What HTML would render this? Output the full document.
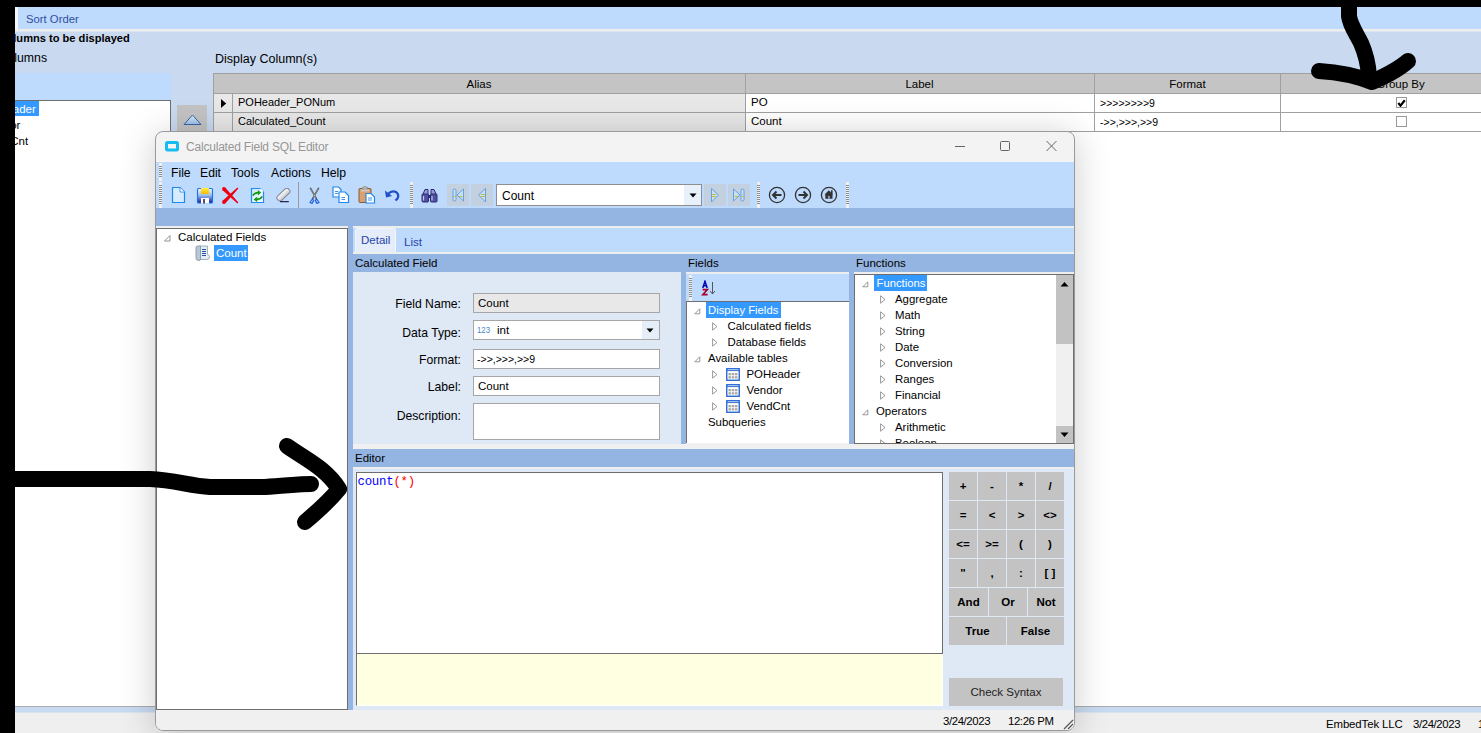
<!DOCTYPE html><html><head><meta charset="utf-8"><style>
html,body{margin:0;padding:0;width:1481px;height:733px;overflow:hidden;background:#fff}
.a{position:absolute}
.t{white-space:nowrap}
</style></head><body>
<div class="a" style="left:0px;top:0px;width:1481px;height:733px;background:#fff"></div><div class="a" style="left:15px;top:7px;width:1466px;height:22px;background:#BEDAFC"></div><div class="a" style="left:15px;top:7px;width:3px;height:22px;background:#F4F8FD"></div><div class="a" style="left:15px;top:31px;width:1466px;height:675px;background:#C9DAF0"></div><div class="a" style="left:15px;top:29px;width:1466px;height:2px;background:#EEEEEE"></div><div class="a" style="left:15px;top:31px;width:1466px;height:1px;background:#DCE5F1"></div><div class="a t" style="left:26px;top:14.43px;font-size:11.3px;line-height:11.3px;color:#3050A0;font-weight:normal;font-family:'Liberation Sans';">Sort Order</div><div class="a t" style="left:-1.5px;top:32.60px;font-size:11.1px;line-height:11.1px;color:#000;font-weight:bold;font-family:'Liberation Sans';">Columns to be displayed</div><div class="a t" style="left:-54.6px;top:51.79px;font-size:12.3px;line-height:12.3px;color:#000;font-weight:normal;font-family:'Liberation Sans';">Available Columns</div><div class="a t" style="left:215px;top:52.62px;font-size:12.5px;line-height:12.5px;color:#000;font-weight:normal;font-family:'Liberation Sans';">Display Column(s)</div><div class="a" style="left:15px;top:73px;width:156px;height:27px;background:#BEDAFC"></div><div class="a" style="left:15px;top:100px;width:156px;height:606px;background:#fff;border-top:1px solid #6E6E6E;border-right:1px solid #6E6E6E;box-sizing:border-box"></div><div class="a" style="left:15px;top:101px;width:24px;height:15px;background:#3399FF"></div><div class="a t" style="left:-18.5px;top:103.57px;font-size:11.5px;line-height:11.5px;color:#fff;font-weight:normal;font-family:'Liberation Sans';">POHeader</div><div class="a t" style="left:-16px;top:119.57px;font-size:11.5px;line-height:11.5px;color:#000;font-weight:normal;font-family:'Liberation Sans';">Vendor</div><div class="a t" style="left:-16px;top:135.57px;font-size:11.5px;line-height:11.5px;color:#000;font-weight:normal;font-family:'Liberation Sans';">VendCnt</div><div class="a" style="left:177px;top:105px;width:30px;height:27px;background:#C3C3C3"></div><svg class="a" style="left:183px;top:114px;" width="19" height="12" viewBox="0 0 19 12"><defs><linearGradient id="ug" x1="0" y1="0" x2="0" y2="1"><stop offset="0" stop-color="#E0EEFC"/><stop offset="1" stop-color="#98BEEA"/></linearGradient></defs><path d="M1 10.5 L9.5 1 L18 10.5 Z" fill="url(#ug)" stroke="#3A64A8" stroke-width="1"/></svg><div class="a" style="left:213px;top:131px;width:1268px;height:575px;background:#fff"></div><div class="a" style="left:213px;top:73px;width:1308px;height:21px;background:#C4C4C4;border:1px solid #A0A0A0;box-sizing:border-box"></div><div class="a" style="left:745px;top:73px;width:1px;height:21px;background:#A0A0A0"></div><div class="a" style="left:1094px;top:73px;width:1px;height:21px;background:#A0A0A0"></div><div class="a" style="left:1280px;top:73px;width:1px;height:21px;background:#A0A0A0"></div><div class="a" style="left:213px;top:94px;width:19px;height:19px;background:#E8E8E8;border-left:1px solid #A0A0A0;border-bottom:1px solid #A0A0A0;box-sizing:border-box"></div><div class="a" style="left:232px;top:94px;width:513px;height:19px;background:#E8E8E8;border-left:1px solid #A0A0A0;border-bottom:1px solid #A0A0A0;box-sizing:border-box"></div><div class="a" style="left:745px;top:94px;width:349px;height:19px;background:#fff;border-left:1px solid #A0A0A0;border-bottom:1px solid #A0A0A0;box-sizing:border-box"></div><div class="a" style="left:1094px;top:94px;width:186px;height:19px;background:#fff;border-left:1px solid #A0A0A0;border-bottom:1px solid #A0A0A0;box-sizing:border-box"></div><div class="a" style="left:1280px;top:94px;width:241px;height:19px;background:#fff;border-left:1px solid #A0A0A0;border-bottom:1px solid #A0A0A0;box-sizing:border-box"></div><div class="a" style="left:213px;top:113px;width:19px;height:19px;background:#E8E8E8;border-left:1px solid #A0A0A0;border-bottom:1px solid #A0A0A0;box-sizing:border-box"></div><div class="a" style="left:232px;top:113px;width:513px;height:19px;background:#E8E8E8;border-left:1px solid #A0A0A0;border-bottom:1px solid #A0A0A0;box-sizing:border-box"></div><div class="a" style="left:745px;top:113px;width:349px;height:19px;background:#fff;border-left:1px solid #A0A0A0;border-bottom:1px solid #A0A0A0;box-sizing:border-box"></div><div class="a" style="left:1094px;top:113px;width:186px;height:19px;background:#fff;border-left:1px solid #A0A0A0;border-bottom:1px solid #A0A0A0;box-sizing:border-box"></div><div class="a" style="left:1280px;top:113px;width:241px;height:19px;background:#fff;border-left:1px solid #A0A0A0;border-bottom:1px solid #A0A0A0;box-sizing:border-box"></div><div class="a t" style="left:213px;top:78.77px;font-size:11.5px;line-height:11.5px;color:#000;font-weight:normal;font-family:'Liberation Sans';width:532px;text-align:center;">Alias</div><div class="a t" style="left:745px;top:78.77px;font-size:11.5px;line-height:11.5px;color:#000;font-weight:normal;font-family:'Liberation Sans';width:349px;text-align:center;">Label</div><div class="a t" style="left:1094px;top:78.77px;font-size:11.5px;line-height:11.5px;color:#000;font-weight:normal;font-family:'Liberation Sans';width:187px;text-align:center;">Format</div><div class="a t" style="left:1280px;top:78.77px;font-size:11.5px;line-height:11.5px;color:#000;font-weight:normal;font-family:'Liberation Sans';width:241px;text-align:center;">Group By</div><svg class="a" style="left:220px;top:98px;" width="7" height="11" viewBox="0 0 7 11"><path d="M1 1 L6.2 5.5 L1 10 Z" fill="#000"/></svg><div class="a t" style="left:238px;top:96.69px;font-size:11px;line-height:11px;color:#000;font-weight:normal;font-family:'Liberation Sans';">POHeader_PONum</div><div class="a t" style="left:238px;top:115.69px;font-size:11px;line-height:11px;color:#000;font-weight:normal;font-family:'Liberation Sans';">Calculated_Count</div><div class="a t" style="left:751px;top:97.27px;font-size:11.5px;line-height:11.5px;color:#000;font-weight:normal;font-family:'Liberation Sans';">PO</div><div class="a t" style="left:751px;top:116.27px;font-size:11.5px;line-height:11.5px;color:#000;font-weight:normal;font-family:'Liberation Sans';">Count</div><div class="a t" style="left:1100px;top:98.11px;font-size:10.5px;line-height:10.5px;color:#000;font-weight:normal;font-family:'Liberation Sans';">&gt;&gt;&gt;&gt;&gt;&gt;&gt;&gt;9</div><div class="a t" style="left:1100px;top:117.11px;font-size:10.5px;line-height:10.5px;color:#000;font-weight:normal;font-family:'Liberation Sans';">-&gt;&gt;,&gt;&gt;&gt;,&gt;&gt;9</div><div class="a" style="left:1396px;top:97px;width:11px;height:11px;background:#fff;border:1px solid #999;box-sizing:border-box"></div><svg class="a" style="left:1397px;top:99px;" width="9" height="8" viewBox="0 0 9 8"><path d="M1.3 4 L3.5 6.6 L7.8 1.2" fill="none" stroke="#000" stroke-width="2.2"/></svg><div class="a" style="left:1396px;top:116px;width:11px;height:11px;background:#fff;border:1px solid #999;box-sizing:border-box"></div><div class="a" style="left:15px;top:706px;width:1466px;height:1px;background:#ACACAC"></div><div class="a" style="left:15px;top:707px;width:1466px;height:5px;background:#C8DAF0"></div><div class="a" style="left:15px;top:712px;width:1466px;height:1px;background:#DCE4EE"></div><div class="a" style="left:15px;top:713px;width:1466px;height:20px;background:#EFEFEF"></div><div class="a t" style="left:1326px;top:718.85px;font-size:11.4px;line-height:11.4px;color:#000;font-weight:normal;font-family:'Liberation Sans';letter-spacing:-0.1px;">EmbedTek LLC</div><div class="a t" style="left:1413px;top:718.85px;font-size:11.4px;line-height:11.4px;color:#000;font-weight:normal;font-family:'Liberation Sans';letter-spacing:-0.4px;">3/24/2023</div><div class="a t" style="left:1478px;top:718.85px;font-size:11.4px;line-height:11.4px;color:#000;font-weight:normal;font-family:'Liberation Sans';letter-spacing:-0.4px;">12:26 PM</div><div class="a" style="left:155px;top:131px;width:920px;height:600px;border-radius:8px;box-shadow:0 4px 36px rgba(0,0,0,0.2)"></div><div class="a" style="left:155px;top:131px;width:920px;height:600px;border-radius:8px;background:#F3F3F3;border:1px solid #9A9A9A;box-sizing:border-box;overflow:hidden"><svg class="a" style="left:9px;top:9px;" width="14" height="11" viewBox="0 0 14 11"><rect x="0" y="0" width="14" height="10.5" rx="2.5" fill="#16BDF0"/><rect x="3" y="3" width="8" height="4.5" fill="#F4F4F4"/></svg><div class="a t" style="left:30px;top:8.84px;font-size:12px;line-height:12px;color:#969696;font-weight:normal;font-family:'Liberation Sans';letter-spacing:-0.2px;">Calculated Field SQL Editor</div><svg class="a" style="left:794px;top:8px;" width="20" height="12" viewBox="0 0 20 12"><path d="M5 6.5 H15" stroke="#555" stroke-width="0.9"/></svg><svg class="a" style="left:839px;top:7px;" width="20" height="14" viewBox="0 0 20 14"><rect x="5.5" y="2.5" width="9" height="9" rx="1" fill="none" stroke="#555" stroke-width="0.9"/></svg><svg class="a" style="left:885px;top:7px;" width="20" height="14" viewBox="0 0 20 14"><path d="M5.5 2 L15.5 12 M15.5 2 L5.5 12" stroke="#555" stroke-width="0.9"/></svg><div class="a" style="left:0px;top:30px;width:918px;height:46px;background:#BEDAFC"></div><div class="a t" style="left:15px;top:34.67px;font-size:12.2px;line-height:12.2px;color:#000;font-weight:normal;font-family:'Liberation Sans';">File</div><div class="a t" style="left:44px;top:34.67px;font-size:12.2px;line-height:12.2px;color:#000;font-weight:normal;font-family:'Liberation Sans';">Edit</div><div class="a t" style="left:75px;top:34.67px;font-size:12.2px;line-height:12.2px;color:#000;font-weight:normal;font-family:'Liberation Sans';">Tools</div><div class="a t" style="left:115px;top:34.67px;font-size:12.2px;line-height:12.2px;color:#000;font-weight:normal;font-family:'Liberation Sans';">Actions</div><div class="a t" style="left:165px;top:34.67px;font-size:12.2px;line-height:12.2px;color:#000;font-weight:normal;font-family:'Liberation Sans';">Help</div><div class="a" style="left:3px;top:31px;width:3px;height:18px;background:#F2F0EC"></div><div class="a" style="left:3px;top:34px;width:3px;height:1px;background:#8C8C8C"></div><div class="a" style="left:3px;top:36px;width:3px;height:1px;background:#8C8C8C"></div><div class="a" style="left:3px;top:38px;width:3px;height:1px;background:#8C8C8C"></div><div class="a" style="left:3px;top:40px;width:3px;height:1px;background:#8C8C8C"></div><div class="a" style="left:3px;top:42px;width:3px;height:1px;background:#8C8C8C"></div><div class="a" style="left:3px;top:44px;width:3px;height:1px;background:#8C8C8C"></div><div class="a" style="left:3px;top:50px;width:3px;height:26px;background:#F2F0EC"></div><div class="a" style="left:3px;top:53px;width:3px;height:1px;background:#8C8C8C"></div><div class="a" style="left:3px;top:55px;width:3px;height:1px;background:#8C8C8C"></div><div class="a" style="left:3px;top:57px;width:3px;height:1px;background:#8C8C8C"></div><div class="a" style="left:3px;top:59px;width:3px;height:1px;background:#8C8C8C"></div><div class="a" style="left:3px;top:61px;width:3px;height:1px;background:#8C8C8C"></div><div class="a" style="left:3px;top:63px;width:3px;height:1px;background:#8C8C8C"></div><div class="a" style="left:3px;top:65px;width:3px;height:1px;background:#8C8C8C"></div><div class="a" style="left:3px;top:67px;width:3px;height:1px;background:#8C8C8C"></div><div class="a" style="left:3px;top:69px;width:3px;height:1px;background:#8C8C8C"></div><div class="a" style="left:3px;top:71px;width:3px;height:1px;background:#8C8C8C"></div><svg class="a" style="left:15px;top:54px;" width="16" height="18" viewBox="0 0 16 18"><path d="M1.5 1.5 H9 L13.5 6 V16.5 H1.5 Z" fill="#D6EBFC" stroke="#1E88F0" stroke-width="1.2" stroke-linejoin="round"/><path d="M9 1.5 V6 H13.5" fill="#fff" stroke="#1E88F0" stroke-width="0.8"/></svg><svg class="a" style="left:40px;top:55px;" width="18" height="17" viewBox="0 0 18 17"><defs><linearGradient id="sg" x1="0" y1="0" x2="0" y2="1"><stop offset="0" stop-color="#F0F8FF"/><stop offset="0.45" stop-color="#9CC4F0"/><stop offset="1" stop-color="#1A1AA0"/></linearGradient><linearGradient id="yg" x1="0" y1="0" x2="0" y2="1"><stop offset="0" stop-color="#FFF040"/><stop offset="1" stop-color="#F8B800"/></linearGradient></defs><rect x="1.5" y="1.5" width="15" height="14.5" rx="1" fill="url(#sg)" stroke="#1A72F2" stroke-width="1.1"/><rect x="5" y="1" width="8" height="6" fill="url(#yg)"/><rect x="5" y="11" width="8" height="5.5" fill="#fff"/><rect x="7" y="12" width="2" height="4.5" fill="#555"/></svg><svg class="a" style="left:66px;top:55px;" width="17" height="17" viewBox="0 0 17 17"><g fill="#EE0010"><path d="M0.6 3.2 L3.2 0.6 L16.4 15.4 L15.4 16.4 Z"/><circle cx="1.9" cy="1.9" r="1.85"/><path d="M0.6 13.8 L3.2 16.4 L16.4 1.6 L15.4 0.6 Z"/><circle cx="1.9" cy="15.1" r="1.85"/></g></svg><svg class="a" style="left:94px;top:55px;" width="15" height="17" viewBox="0 0 15 17"><defs><linearGradient id="rg" x1="0" y1="0" x2="1" y2="1"><stop offset="0" stop-color="#C8E6FC"/><stop offset="1" stop-color="#FFFFFF"/></linearGradient></defs><path d="M1.5 1.5 H10.5 L13.5 4.5 V15.5 H1.5 Z" fill="url(#rg)" stroke="#1E8CF5" stroke-width="1.2"/><path d="M10.5 1 V4.5 H14" fill="#fff" stroke="none"/><g fill="none" stroke="#109A10" stroke-width="1.7"><path d="M2.8 8.6 Q4.5 5.6 8.6 5.6"/><path d="M12.2 9.4 Q10.5 12.6 6.4 12.4"/></g><g fill="#109A10"><path d="M7.8 3 L11.2 5.6 L7.8 8.4 Z"/><path d="M7.2 9.8 L3.6 12.4 L7.2 15 Z"/></g></svg><svg class="a" style="left:119px;top:56px;" width="17" height="15" viewBox="0 0 17 15"><defs><linearGradient id="eg" x1="0" y1="0" x2="0" y2="1"><stop offset="0" stop-color="#FFFFFF"/><stop offset="1" stop-color="#C4C8D0"/></linearGradient></defs><rect x="-7.6" y="-2.9" width="15.2" height="5.8" rx="2.4" transform="translate(8.4,6.6) rotate(-43)" fill="url(#eg)" stroke="#7E8694" stroke-width="1"/><path d="M5 13.6 H13.8" stroke="#262650" stroke-width="1.3"/></svg><div class="a" style="left:142px;top:50px;width:1px;height:26px;background:#9A9A9A"></div><svg class="a" style="left:151px;top:55px;" width="15" height="17" viewBox="0 0 15 17"><path d="M3.2 0.8 L9.6 12.2 M11.8 0.8 L5.4 12.2" stroke="#333" stroke-width="1.5"/><path d="M3.4 1.4 L9.2 11.6 M11.6 1.4 L5.8 11.6" stroke="#F4F4F4" stroke-width="0.5"/><path d="M5.4 12 L3 15.5 L5 16.3 L6.6 13.6 Z M9.6 12 L12 15.5 L10 16.3 L8.4 13.6 Z" fill="#fff" stroke="#1F5FE0" stroke-width="1.3" stroke-linejoin="round"/></svg><svg class="a" style="left:176px;top:54px;" width="18" height="18" viewBox="0 0 18 18"><path d="M1 1 H6.5 L9 3.5 V11 H1 Z" fill="#fff" stroke="#1E88F0" stroke-width="1.2"/><path d="M7 6 H13 L16.5 9.5 V16.5 H7 Z" fill="#fff" stroke="#1E88F0" stroke-width="1.2"/><path d="M3 5.5 H6 M3 7.5 H6 M9.5 11.5 H13 M9.5 13.5 H13" stroke="#1E88F0" stroke-width="0.9"/></svg><svg class="a" style="left:202px;top:54px;" width="18" height="18" viewBox="0 0 18 18"><rect x="1" y="2.5" width="12" height="14" rx="1" fill="#D9A070" stroke="#8A5A30" stroke-width="1"/><path d="M4 3 Q4 0.8 7 0.8 Q10 0.8 10 3 Z" fill="#DDD" stroke="#777" stroke-width="0.9"/><rect x="3" y="3.5" width="8" height="2" fill="#C9C9C9"/><path d="M8 7.5 H13 L16.5 11 V17 H8 Z" fill="#fff" stroke="#1E88F0" stroke-width="1.2"/><path d="M10 12 H14 M10 14 H14" stroke="#1E88F0" stroke-width="0.9"/></svg><svg class="a" style="left:228px;top:56px;" width="17" height="15" viewBox="0 0 17 15"><path d="M4 6 Q8 2 12 4 Q15.5 6.5 13.5 10.5 L11.5 12.5" fill="none" stroke="#2050C8" stroke-width="2.2"/><path d="M1 2.5 L2 9.5 L8 8 Z" fill="#2050C8"/></svg><div class="a" style="left:254px;top:50px;width:3px;height:26px;background:#F2F0EC"></div><div class="a" style="left:254px;top:53px;width:3px;height:1px;background:#8C8C8C"></div><div class="a" style="left:254px;top:55px;width:3px;height:1px;background:#8C8C8C"></div><div class="a" style="left:254px;top:57px;width:3px;height:1px;background:#8C8C8C"></div><div class="a" style="left:254px;top:59px;width:3px;height:1px;background:#8C8C8C"></div><div class="a" style="left:254px;top:61px;width:3px;height:1px;background:#8C8C8C"></div><div class="a" style="left:254px;top:63px;width:3px;height:1px;background:#8C8C8C"></div><div class="a" style="left:254px;top:65px;width:3px;height:1px;background:#8C8C8C"></div><div class="a" style="left:254px;top:67px;width:3px;height:1px;background:#8C8C8C"></div><div class="a" style="left:254px;top:69px;width:3px;height:1px;background:#8C8C8C"></div><div class="a" style="left:254px;top:71px;width:3px;height:1px;background:#8C8C8C"></div><svg class="a" style="left:265px;top:56px;" width="17" height="15" viewBox="0 0 17 15"><path d="M2 6 L4 1.5 H7 V6 M10 6 V1.5 H13 L15 6" fill="#9A9AD8" stroke="#2A2A70" stroke-width="1"/><rect x="1" y="6" width="6.5" height="8" rx="1" fill="#5050A0" stroke="#2A2A70" stroke-width="1"/><rect x="9.5" y="6" width="6.5" height="8" rx="1" fill="#5050A0" stroke="#2A2A70" stroke-width="1"/><rect x="7" y="7" width="3" height="3" fill="#2A2A70"/><path d="M2.5 8 V12.5 M11 8 V12.5" stroke="#C8C8F0" stroke-width="1.2"/></svg><div class="a" style="left:291px;top:52px;width:22px;height:22px;background:#C3D0E0"></div><div class="a" style="left:315px;top:52px;width:22px;height:22px;background:#C3D0E0"></div><svg class="a" style="left:291px;top:52px;" width="22" height="22" viewBox="0 0 22 22"><rect x="6" y="5" width="3" height="12" rx="1.5" fill="#C8E0F4" stroke="#5A9AE0" stroke-width="0.9"/><path d="M16.5 5 L10 11 L16.5 17 Z" fill="#C8E0F4" stroke="#5A9AE0" stroke-width="0.9"/><path d="M12 12.5 H15.5 M6.5 12.5 H8.5" stroke="#C0C040" stroke-width="1"/></svg><svg class="a" style="left:315px;top:52px;" width="22" height="22" viewBox="0 0 22 22"><path d="M14.5 4.5 L7.5 11 L14.5 18 Z" fill="#C8E0F4" stroke="#5A9AE0" stroke-width="0.9"/><path d="M10 10.5 H14 M10 12.5 H14" stroke="#C0C040" stroke-width="1"/></svg><div class="a" style="left:340px;top:52px;width:206px;height:22px;background:#fff;border:1px solid #8E8E8E;box-sizing:border-box"></div><div class="a" style="left:528px;top:53px;width:17px;height:20px;background:#E8F0FA"></div><svg class="a" style="left:533px;top:61px;" width="8" height="5" viewBox="0 0 8 5"><path d="M0.5 0.5 H7.5 L4 4.5 Z" fill="#000"/></svg><div class="a t" style="left:346px;top:57.64px;font-size:12px;line-height:12px;color:#000;font-weight:normal;font-family:'Liberation Sans';">Count</div><div class="a" style="left:548px;top:52px;width:22px;height:22px;background:#C3D0E0"></div><div class="a" style="left:572px;top:52px;width:22px;height:22px;background:#C3D0E0"></div><svg class="a" style="left:548px;top:52px;" width="22" height="22" viewBox="0 0 22 22"><path d="M7.5 4.5 L14.5 11 L7.5 18 Z" fill="#C8E0F4" stroke="#5A9AE0" stroke-width="0.9"/><path d="M8 10.5 H12 M8 12.5 H12" stroke="#C0C040" stroke-width="1"/></svg><svg class="a" style="left:572px;top:52px;" width="22" height="22" viewBox="0 0 22 22"><path d="M5.5 5 L12 11 L5.5 17 Z" fill="#C8E0F4" stroke="#5A9AE0" stroke-width="0.9"/><rect x="13" y="5" width="3" height="12" rx="1.5" fill="#C8E0F4" stroke="#5A9AE0" stroke-width="0.9"/><path d="M6.5 12.5 H10 M13.5 12.5 H15.5" stroke="#C0C040" stroke-width="1"/></svg><div class="a" style="left:601px;top:50px;width:3px;height:26px;background:#F2F0EC"></div><div class="a" style="left:601px;top:53px;width:3px;height:1px;background:#8C8C8C"></div><div class="a" style="left:601px;top:55px;width:3px;height:1px;background:#8C8C8C"></div><div class="a" style="left:601px;top:57px;width:3px;height:1px;background:#8C8C8C"></div><div class="a" style="left:601px;top:59px;width:3px;height:1px;background:#8C8C8C"></div><div class="a" style="left:601px;top:61px;width:3px;height:1px;background:#8C8C8C"></div><div class="a" style="left:601px;top:63px;width:3px;height:1px;background:#8C8C8C"></div><div class="a" style="left:601px;top:65px;width:3px;height:1px;background:#8C8C8C"></div><div class="a" style="left:601px;top:67px;width:3px;height:1px;background:#8C8C8C"></div><div class="a" style="left:601px;top:69px;width:3px;height:1px;background:#8C8C8C"></div><div class="a" style="left:601px;top:71px;width:3px;height:1px;background:#8C8C8C"></div><svg class="a" style="left:612px;top:54px;" width="18" height="18" viewBox="0 0 18 18"><circle cx="9" cy="9" r="7.6" fill="none" stroke="#333" stroke-width="1.3"/><path d="M13.5 9 H5.5 M8.5 5.5 L5 9 L8.5 12.5" fill="none" stroke="#333" stroke-width="2"/></svg><svg class="a" style="left:638px;top:54px;" width="18" height="18" viewBox="0 0 18 18"><circle cx="9" cy="9" r="7.6" fill="none" stroke="#333" stroke-width="1.3"/><path d="M4.5 9 H12.5 M9.5 5.5 L13 9 L9.5 12.5" fill="none" stroke="#333" stroke-width="2"/></svg><svg class="a" style="left:664px;top:54px;" width="18" height="18" viewBox="0 0 18 18"><circle cx="9" cy="9" r="7.6" fill="none" stroke="#333" stroke-width="1.3"/><path d="M4.6 8.6 L8.8 4.3 L11 6.5 V4.2 H12.6 V8.1 L13.2 8.6 H12.5 V12.8 H5.3 V8.6 Z" fill="#333"/><rect x="7.9" y="9.9" width="2" height="2.9" fill="#8A9AB0"/></svg><div class="a" style="left:690px;top:50px;width:3px;height:26px;background:#F2F0EC"></div><div class="a" style="left:690px;top:53px;width:3px;height:1px;background:#8C8C8C"></div><div class="a" style="left:690px;top:55px;width:3px;height:1px;background:#8C8C8C"></div><div class="a" style="left:690px;top:57px;width:3px;height:1px;background:#8C8C8C"></div><div class="a" style="left:690px;top:59px;width:3px;height:1px;background:#8C8C8C"></div><div class="a" style="left:690px;top:61px;width:3px;height:1px;background:#8C8C8C"></div><div class="a" style="left:690px;top:63px;width:3px;height:1px;background:#8C8C8C"></div><div class="a" style="left:690px;top:65px;width:3px;height:1px;background:#8C8C8C"></div><div class="a" style="left:690px;top:67px;width:3px;height:1px;background:#8C8C8C"></div><div class="a" style="left:690px;top:69px;width:3px;height:1px;background:#8C8C8C"></div><div class="a" style="left:690px;top:71px;width:3px;height:1px;background:#8C8C8C"></div><div class="a" style="left:0px;top:76px;width:918px;height:18px;background:#94B4E1"></div><div class="a" style="left:0px;top:94px;width:192px;height:2px;background:#EEEEEE"></div><div class="a" style="left:197px;top:94px;width:721px;height:2px;background:#EEEEEE"></div><div class="a" style="left:0px;top:96px;width:192px;height:482px;background:#fff;border:1px solid #6E6E6E;box-sizing:border-box"></div><div class="a t" style="left:22px;top:99.77px;font-size:11.5px;line-height:11.5px;color:#000;font-weight:normal;font-family:'Liberation Sans';">Calculated Fields</div><svg class="a" style="left:8px;top:103px;" width="7" height="7" viewBox="0 0 7 7"><path d="M6 0.5 V6 H0.5 Z" fill="none" stroke="#888" stroke-width="0.9"/></svg><div class="a" style="left:58px;top:113px;width:34px;height:16px;background:#3399FF"></div><svg class="a" style="left:39px;top:113px;" width="15" height="16" viewBox="0 0 15 16"><path d="M5 1 H12.5 V9.5 Q14.5 10 14.5 12 Q14.5 14.5 12 14.5 H5 Z" fill="#E4ECF4" stroke="#9AAAB8" stroke-width="0.9"/><path d="M1 2.5 Q1 1 3 1 H5.5 V14 Q5.5 15.5 4 15.5 Q1 15.5 1 13 Z" fill="#B8C8D8" stroke="#8898A8" stroke-width="0.9"/><path d="M7 4.5 H11 M7 6.5 H11 M7 8.5 H11 M7 10.5 H11" stroke="#2A50A0" stroke-width="1"/></svg><div class="a t" style="left:60px;top:116.27px;font-size:11.5px;line-height:11.5px;color:#fff;font-weight:normal;font-family:'Liberation Sans';">Count</div><div class="a" style="left:192px;top:94px;width:5px;height:484px;background:#94B4E1"></div><div class="a" style="left:197px;top:96px;width:721px;height:24px;background:#BEDAFC"></div><div class="a" style="left:199px;top:96px;width:41px;height:24px;background:#E4EDF9;border:1px solid #F2F7FD;border-bottom:none;border-radius:3px 3px 0 0;box-sizing:border-box"></div><div class="a t" style="left:205px;top:103.27px;font-size:11.5px;line-height:11.5px;color:#2844A8;font-weight:normal;font-family:'Liberation Sans';">Detail</div><div class="a t" style="left:248px;top:105.27px;font-size:11.5px;line-height:11.5px;color:#2844A8;font-weight:normal;font-family:'Liberation Sans';">List</div><div class="a" style="left:197px;top:120px;width:721px;height:2px;background:#EEEEEE"></div><div class="a" style="left:197px;top:122px;width:721px;height:18px;background:#94B4E1"></div><div class="a t" style="left:199px;top:126.27px;font-size:11.5px;line-height:11.5px;color:#000;font-weight:normal;font-family:'Liberation Sans';">Calculated Field</div><div class="a t" style="left:532px;top:126.27px;font-size:11.5px;line-height:11.5px;color:#000;font-weight:normal;font-family:'Liberation Sans';">Fields</div><div class="a t" style="left:700px;top:126.27px;font-size:11.5px;line-height:11.5px;color:#000;font-weight:normal;font-family:'Liberation Sans';">Functions</div><div class="a" style="left:197px;top:140px;width:328px;height:172px;background:#DFE8F5"></div><div class="a t" style="left:204px;top:165.67px;font-size:12.2px;line-height:12.2px;color:#000;font-weight:normal;font-family:'Liberation Sans';width:101px;text-align:right;">Field Name:</div><div class="a t" style="left:204px;top:194.67px;font-size:12.2px;line-height:12.2px;color:#000;font-weight:normal;font-family:'Liberation Sans';width:101px;text-align:right;">Data Type:</div><div class="a t" style="left:204px;top:221.67px;font-size:12.2px;line-height:12.2px;color:#000;font-weight:normal;font-family:'Liberation Sans';width:101px;text-align:right;">Format:</div><div class="a t" style="left:204px;top:248.67px;font-size:12.2px;line-height:12.2px;color:#000;font-weight:normal;font-family:'Liberation Sans';width:101px;text-align:right;">Label:</div><div class="a t" style="left:204px;top:278.47px;font-size:12.2px;line-height:12.2px;color:#000;font-weight:normal;font-family:'Liberation Sans';width:101px;text-align:right;">Description:</div><div class="a" style="left:317px;top:161px;width:187px;height:20px;background:#E8E8E8;border:1px solid #A6A6A6;box-sizing:border-box"></div><div class="a t" style="left:322px;top:165.77px;font-size:11.5px;line-height:11.5px;color:#000;font-weight:normal;font-family:'Liberation Sans';">Count</div><div class="a" style="left:317px;top:188px;width:187px;height:20px;background:#fff;border:1px solid #A6A6A6;box-sizing:border-box"></div><div class="a" style="left:486px;top:189px;width:17px;height:18px;background:#E5EEF9"></div><svg class="a" style="left:490px;top:196px;" width="8" height="5" viewBox="0 0 8 5"><path d="M0.5 0.5 H7.5 L4 4.5 Z" fill="#000"/></svg><div class="a t" style="left:321px;top:193.30px;font-size:9.8px;line-height:9.8px;color:#4A88D0;font-weight:normal;font-family:'Liberation Sans';transform:scaleX(0.8);transform-origin:0 0;">123</div><div class="a t" style="left:341px;top:193.07px;font-size:11.5px;line-height:11.5px;color:#000;font-weight:normal;font-family:'Liberation Sans';">int</div><div class="a" style="left:317px;top:217px;width:187px;height:20px;background:#fff;border:1px solid #A6A6A6;box-sizing:border-box"></div><div class="a t" style="left:321px;top:222.31px;font-size:10.5px;line-height:10.5px;color:#000;font-weight:normal;font-family:'Liberation Sans';">-&gt;&gt;,&gt;&gt;&gt;,&gt;&gt;9</div><div class="a" style="left:317px;top:244px;width:187px;height:20px;background:#fff;border:1px solid #A6A6A6;box-sizing:border-box"></div><div class="a t" style="left:322px;top:249.27px;font-size:11.5px;line-height:11.5px;color:#000;font-weight:normal;font-family:'Liberation Sans';">Count</div><div class="a" style="left:317px;top:271px;width:187px;height:37px;background:#fff;border:1px solid #A6A6A6;box-sizing:border-box"></div><div class="a" style="left:525px;top:140px;width:5px;height:172px;background:#94B4E1"></div><div class="a" style="left:530px;top:140px;width:163px;height:2px;background:#EEEEEE"></div><div class="a" style="left:530px;top:142px;width:163px;height:27px;background:#BEDAFC"></div><div class="a" style="left:530px;top:169px;width:163px;height:142px;background:#fff;border-top:1px solid #6E6E6E;border-left:1px solid #6E6E6E;box-sizing:border-box"></div><div class="a" style="left:693px;top:140px;width:5px;height:172px;background:#94B4E1"></div><div class="a" style="left:530px;top:140px;width:163px;height:2px;background:#EEEEEE"></div><div class="a" style="left:698px;top:140px;width:220px;height:2px;background:#EEEEEE"></div><div class="a" style="left:698px;top:142px;width:220px;height:170px;background:#fff;border:1px solid #6E6E6E;box-sizing:border-box"></div><div class="a" style="left:533px;top:143px;width:3px;height:26px;background:#F2F0EC"></div><div class="a" style="left:533px;top:146px;width:3px;height:1px;background:#8C8C8C"></div><div class="a" style="left:533px;top:148px;width:3px;height:1px;background:#8C8C8C"></div><div class="a" style="left:533px;top:150px;width:3px;height:1px;background:#8C8C8C"></div><div class="a" style="left:533px;top:152px;width:3px;height:1px;background:#8C8C8C"></div><div class="a" style="left:533px;top:154px;width:3px;height:1px;background:#8C8C8C"></div><div class="a" style="left:533px;top:156px;width:3px;height:1px;background:#8C8C8C"></div><div class="a" style="left:533px;top:158px;width:3px;height:1px;background:#8C8C8C"></div><div class="a" style="left:533px;top:160px;width:3px;height:1px;background:#8C8C8C"></div><div class="a" style="left:533px;top:162px;width:3px;height:1px;background:#8C8C8C"></div><div class="a" style="left:533px;top:164px;width:3px;height:1px;background:#8C8C8C"></div><svg class="a" style="left:544px;top:148px;" width="17" height="17" viewBox="0 0 17 17"><path d="M2.8 8 L5 1.3 L7.2 8 M3.6 5.8 H6.4" fill="none" stroke="#0000B0" stroke-width="1.5"/><path d="M2.6 9.6 H7.4 L2.8 14.6 H7.6" fill="none" stroke="#A8002E" stroke-width="1.6"/><path d="M12.5 2 V14 M10 11 L12.5 14 L15 11" fill="none" stroke="#555" stroke-width="1"/></svg><div class="a" style="left:550px;top:170px;width:75px;height:16px;background:#3399FF"></div><svg class="a" style="left:538px;top:176px;" width="7" height="7" viewBox="0 0 7 7"><path d="M5.8 0.8 V5.8 H0.8 Z" fill="none" stroke="#8C8C8C" stroke-width="0.9"/></svg><div class="a t" style="left:552px;top:173.43px;font-size:11.3px;line-height:11.3px;color:#fff;font-weight:normal;font-family:'Liberation Sans';">Display Fields</div><svg class="a" style="left:556px;top:190px;" width="6" height="9" viewBox="0 0 6 9"><path d="M0.6 0.8 L5 4.5 L0.6 8.2 Z" fill="none" stroke="#8C8C8C" stroke-width="0.9"/></svg><div class="a t" style="left:571.5px;top:189.35px;font-size:11.4px;line-height:11.4px;color:#000;font-weight:normal;font-family:'Liberation Sans';">Calculated fields</div><svg class="a" style="left:556px;top:206px;" width="6" height="9" viewBox="0 0 6 9"><path d="M0.6 0.8 L5 4.5 L0.6 8.2 Z" fill="none" stroke="#8C8C8C" stroke-width="0.9"/></svg><div class="a t" style="left:571.5px;top:205.35px;font-size:11.4px;line-height:11.4px;color:#000;font-weight:normal;font-family:'Liberation Sans';">Database fields</div><svg class="a" style="left:538px;top:224px;" width="7" height="7" viewBox="0 0 7 7"><path d="M5.8 0.8 V5.8 H0.8 Z" fill="none" stroke="#8C8C8C" stroke-width="0.9"/></svg><div class="a t" style="left:552px;top:221.35px;font-size:11.4px;line-height:11.4px;color:#000;font-weight:normal;font-family:'Liberation Sans';">Available tables</div><svg class="a" style="left:556px;top:238px;" width="6" height="9" viewBox="0 0 6 9"><path d="M0.6 0.8 L5 4.5 L0.6 8.2 Z" fill="none" stroke="#8C8C8C" stroke-width="0.9"/></svg><svg class="a" style="left:570px;top:236px;" width="14" height="13" viewBox="0 0 14 13"><rect x="0.75" y="0.75" width="12.5" height="11.5" fill="#fff" stroke="#1A5FD0" stroke-width="1.3"/><path d="M1 2.6 H13" stroke="#1A5FD0" stroke-width="0.9"/><g fill="#A8A8A8"><rect x="2.5" y="5" width="2.5" height="2.3"/><rect x="5.8" y="5" width="2.5" height="2.3"/><rect x="9" y="5" width="2.5" height="2.3"/><rect x="2.5" y="8.2" width="2.5" height="2.3"/><rect x="5.8" y="8.2" width="2.5" height="2.3"/><rect x="9" y="8.2" width="2.5" height="2.3"/></g></svg><div class="a t" style="left:590.5px;top:237.35px;font-size:11.4px;line-height:11.4px;color:#000;font-weight:normal;font-family:'Liberation Sans';">POHeader</div><svg class="a" style="left:556px;top:254px;" width="6" height="9" viewBox="0 0 6 9"><path d="M0.6 0.8 L5 4.5 L0.6 8.2 Z" fill="none" stroke="#8C8C8C" stroke-width="0.9"/></svg><svg class="a" style="left:570px;top:252px;" width="14" height="13" viewBox="0 0 14 13"><rect x="0.75" y="0.75" width="12.5" height="11.5" fill="#fff" stroke="#1A5FD0" stroke-width="1.3"/><path d="M1 2.6 H13" stroke="#1A5FD0" stroke-width="0.9"/><g fill="#A8A8A8"><rect x="2.5" y="5" width="2.5" height="2.3"/><rect x="5.8" y="5" width="2.5" height="2.3"/><rect x="9" y="5" width="2.5" height="2.3"/><rect x="2.5" y="8.2" width="2.5" height="2.3"/><rect x="5.8" y="8.2" width="2.5" height="2.3"/><rect x="9" y="8.2" width="2.5" height="2.3"/></g></svg><div class="a t" style="left:590.5px;top:253.35px;font-size:11.4px;line-height:11.4px;color:#000;font-weight:normal;font-family:'Liberation Sans';">Vendor</div><svg class="a" style="left:556px;top:270px;" width="6" height="9" viewBox="0 0 6 9"><path d="M0.6 0.8 L5 4.5 L0.6 8.2 Z" fill="none" stroke="#8C8C8C" stroke-width="0.9"/></svg><svg class="a" style="left:570px;top:268px;" width="14" height="13" viewBox="0 0 14 13"><rect x="0.75" y="0.75" width="12.5" height="11.5" fill="#fff" stroke="#1A5FD0" stroke-width="1.3"/><path d="M1 2.6 H13" stroke="#1A5FD0" stroke-width="0.9"/><g fill="#A8A8A8"><rect x="2.5" y="5" width="2.5" height="2.3"/><rect x="5.8" y="5" width="2.5" height="2.3"/><rect x="9" y="5" width="2.5" height="2.3"/><rect x="2.5" y="8.2" width="2.5" height="2.3"/><rect x="5.8" y="8.2" width="2.5" height="2.3"/><rect x="9" y="8.2" width="2.5" height="2.3"/></g></svg><div class="a t" style="left:590.5px;top:269.35px;font-size:11.4px;line-height:11.4px;color:#000;font-weight:normal;font-family:'Liberation Sans';">VendCnt</div><div class="a t" style="left:552px;top:285.35px;font-size:11.4px;line-height:11.4px;color:#000;font-weight:normal;font-family:'Liberation Sans';">Subqueries</div><div class="a" style="left:718px;top:143px;width:53px;height:16px;background:#3399FF"></div><svg class="a" style="left:706px;top:149px;" width="7" height="7" viewBox="0 0 7 7"><path d="M5.8 0.8 V5.8 H0.8 Z" fill="none" stroke="#8C8C8C" stroke-width="0.9"/></svg><div class="a t" style="left:720.5px;top:146.43px;font-size:11.3px;line-height:11.3px;color:#fff;font-weight:normal;font-family:'Liberation Sans';">Functions</div><svg class="a" style="left:724px;top:163px;" width="6" height="9" viewBox="0 0 6 9"><path d="M0.6 0.8 L5 4.5 L0.6 8.2 Z" fill="none" stroke="#8C8C8C" stroke-width="0.9"/></svg><div class="a t" style="left:739px;top:162.35px;font-size:11.4px;line-height:11.4px;color:#000;font-weight:normal;font-family:'Liberation Sans';">Aggregate</div><svg class="a" style="left:724px;top:179px;" width="6" height="9" viewBox="0 0 6 9"><path d="M0.6 0.8 L5 4.5 L0.6 8.2 Z" fill="none" stroke="#8C8C8C" stroke-width="0.9"/></svg><div class="a t" style="left:739px;top:178.35px;font-size:11.4px;line-height:11.4px;color:#000;font-weight:normal;font-family:'Liberation Sans';">Math</div><svg class="a" style="left:724px;top:195px;" width="6" height="9" viewBox="0 0 6 9"><path d="M0.6 0.8 L5 4.5 L0.6 8.2 Z" fill="none" stroke="#8C8C8C" stroke-width="0.9"/></svg><div class="a t" style="left:739px;top:194.35px;font-size:11.4px;line-height:11.4px;color:#000;font-weight:normal;font-family:'Liberation Sans';">String</div><svg class="a" style="left:724px;top:211px;" width="6" height="9" viewBox="0 0 6 9"><path d="M0.6 0.8 L5 4.5 L0.6 8.2 Z" fill="none" stroke="#8C8C8C" stroke-width="0.9"/></svg><div class="a t" style="left:739px;top:210.35px;font-size:11.4px;line-height:11.4px;color:#000;font-weight:normal;font-family:'Liberation Sans';">Date</div><svg class="a" style="left:724px;top:227px;" width="6" height="9" viewBox="0 0 6 9"><path d="M0.6 0.8 L5 4.5 L0.6 8.2 Z" fill="none" stroke="#8C8C8C" stroke-width="0.9"/></svg><div class="a t" style="left:739px;top:226.35px;font-size:11.4px;line-height:11.4px;color:#000;font-weight:normal;font-family:'Liberation Sans';">Conversion</div><svg class="a" style="left:724px;top:243px;" width="6" height="9" viewBox="0 0 6 9"><path d="M0.6 0.8 L5 4.5 L0.6 8.2 Z" fill="none" stroke="#8C8C8C" stroke-width="0.9"/></svg><div class="a t" style="left:739px;top:242.35px;font-size:11.4px;line-height:11.4px;color:#000;font-weight:normal;font-family:'Liberation Sans';">Ranges</div><svg class="a" style="left:724px;top:259px;" width="6" height="9" viewBox="0 0 6 9"><path d="M0.6 0.8 L5 4.5 L0.6 8.2 Z" fill="none" stroke="#8C8C8C" stroke-width="0.9"/></svg><div class="a t" style="left:739px;top:258.35px;font-size:11.4px;line-height:11.4px;color:#000;font-weight:normal;font-family:'Liberation Sans';">Financial</div><svg class="a" style="left:706px;top:277px;" width="7" height="7" viewBox="0 0 7 7"><path d="M5.8 0.8 V5.8 H0.8 Z" fill="none" stroke="#8C8C8C" stroke-width="0.9"/></svg><div class="a t" style="left:720px;top:274.35px;font-size:11.4px;line-height:11.4px;color:#000;font-weight:normal;font-family:'Liberation Sans';">Operators</div><svg class="a" style="left:724px;top:291px;" width="6" height="9" viewBox="0 0 6 9"><path d="M0.6 0.8 L5 4.5 L0.6 8.2 Z" fill="none" stroke="#8C8C8C" stroke-width="0.9"/></svg><div class="a t" style="left:739px;top:290.35px;font-size:11.4px;line-height:11.4px;color:#000;font-weight:normal;font-family:'Liberation Sans';">Arithmetic</div><svg class="a" style="left:724px;top:307px;" width="6" height="9" viewBox="0 0 6 9"><path d="M0.6 0.8 L5 4.5 L0.6 8.2 Z" fill="none" stroke="#8C8C8C" stroke-width="0.9"/></svg><div class="a t" style="left:739px;top:306.35px;font-size:11.4px;line-height:11.4px;color:#000;font-weight:normal;font-family:'Liberation Sans';">Boolean</div><div class="a" style="left:900px;top:143px;width:17px;height:168px;background:#F0F0F0"></div><div class="a" style="left:900px;top:143px;width:17px;height:69px;background:#C2C2C2"></div><div class="a" style="left:900px;top:294px;width:17px;height:17px;background:#C2C2C2"></div><svg class="a" style="left:904px;top:149px;" width="9" height="6" viewBox="0 0 9 6"><path d="M0.5 5.5 L4.5 1 L8.5 5.5 Z" fill="#000"/></svg><svg class="a" style="left:904px;top:300px;" width="9" height="6" viewBox="0 0 9 6"><path d="M0.5 0.5 L4.5 5 L8.5 0.5 Z" fill="#000"/></svg><div class="a" style="left:698px;top:311px;width:220px;height:1px;background:#6E6E6E"></div><div class="a" style="left:197px;top:312px;width:721px;height:5px;background:#F0F0F0"></div><div class="a" style="left:197px;top:317px;width:721px;height:18px;background:#94B4E1"></div><div class="a t" style="left:199px;top:320.77px;font-size:11.5px;line-height:11.5px;color:#000;font-weight:normal;font-family:'Liberation Sans';">Editor</div><div class="a" style="left:197px;top:335px;width:721px;height:2px;background:#EEEEEE"></div><div class="a" style="left:197px;top:337px;width:721px;height:241px;background:#DFE8F5"></div><div class="a" style="left:200px;top:340px;width:587px;height:182px;background:#fff;border:1px solid #6E6E6E;box-sizing:border-box"></div><div class="a t" style="left:201.5px;top:344.00px;font-size:12.4px;line-height:12.4px;color:#000;font-weight:normal;font-family:'Liberation Mono';letter-spacing:-0.25px;"><span style="color:#0000FF">count</span><span style="color:#FF0000">(*)</span></div><div class="a" style="left:200px;top:522px;width:587px;height:52px;background:#FFFFE1;border-left:1px solid #6E6E6E;border-right:1px solid #fff;border-bottom:1px solid #fff;box-sizing:border-box"></div><div class="a" style="left:793px;top:340px;width:28px;height:28px;background:#C3C3C3"></div><div class="a t" style="left:793px;top:349.41px;font-size:11.5px;line-height:11.5px;color:#000;font-weight:bold;font-family:'Liberation Sans';width:28px;text-align:center;">+</div><div class="a" style="left:822px;top:340px;width:28px;height:28px;background:#C3C3C3"></div><div class="a t" style="left:822px;top:349.41px;font-size:11.5px;line-height:11.5px;color:#000;font-weight:bold;font-family:'Liberation Sans';width:28px;text-align:center;">-</div><div class="a" style="left:851px;top:340px;width:28px;height:28px;background:#C3C3C3"></div><div class="a t" style="left:851px;top:349.41px;font-size:11.5px;line-height:11.5px;color:#000;font-weight:bold;font-family:'Liberation Sans';width:28px;text-align:center;">*</div><div class="a" style="left:880px;top:340px;width:28px;height:28px;background:#C3C3C3"></div><div class="a t" style="left:880px;top:349.41px;font-size:11.5px;line-height:11.5px;color:#000;font-weight:bold;font-family:'Liberation Sans';width:28px;text-align:center;">/</div><div class="a" style="left:793px;top:369px;width:28px;height:28px;background:#C3C3C3"></div><div class="a t" style="left:793px;top:378.41px;font-size:11.5px;line-height:11.5px;color:#000;font-weight:bold;font-family:'Liberation Sans';width:28px;text-align:center;">=</div><div class="a" style="left:822px;top:369px;width:28px;height:28px;background:#C3C3C3"></div><div class="a t" style="left:822px;top:378.41px;font-size:11.5px;line-height:11.5px;color:#000;font-weight:bold;font-family:'Liberation Sans';width:28px;text-align:center;">&lt;</div><div class="a" style="left:851px;top:369px;width:28px;height:28px;background:#C3C3C3"></div><div class="a t" style="left:851px;top:378.41px;font-size:11.5px;line-height:11.5px;color:#000;font-weight:bold;font-family:'Liberation Sans';width:28px;text-align:center;">&gt;</div><div class="a" style="left:880px;top:369px;width:28px;height:28px;background:#C3C3C3"></div><div class="a t" style="left:880px;top:378.41px;font-size:11.5px;line-height:11.5px;color:#000;font-weight:bold;font-family:'Liberation Sans';width:28px;text-align:center;">&lt;&gt;</div><div class="a" style="left:793px;top:398px;width:28px;height:28px;background:#C3C3C3"></div><div class="a t" style="left:793px;top:407.41px;font-size:11.5px;line-height:11.5px;color:#000;font-weight:bold;font-family:'Liberation Sans';width:28px;text-align:center;">&lt;=</div><div class="a" style="left:822px;top:398px;width:28px;height:28px;background:#C3C3C3"></div><div class="a t" style="left:822px;top:407.41px;font-size:11.5px;line-height:11.5px;color:#000;font-weight:bold;font-family:'Liberation Sans';width:28px;text-align:center;">&gt;=</div><div class="a" style="left:851px;top:398px;width:28px;height:28px;background:#C3C3C3"></div><div class="a t" style="left:851px;top:407.41px;font-size:11.5px;line-height:11.5px;color:#000;font-weight:bold;font-family:'Liberation Sans';width:28px;text-align:center;">(</div><div class="a" style="left:880px;top:398px;width:28px;height:28px;background:#C3C3C3"></div><div class="a t" style="left:880px;top:407.41px;font-size:11.5px;line-height:11.5px;color:#000;font-weight:bold;font-family:'Liberation Sans';width:28px;text-align:center;">)</div><div class="a" style="left:793px;top:427px;width:28px;height:28px;background:#C3C3C3"></div><div class="a t" style="left:793px;top:436.41px;font-size:11.5px;line-height:11.5px;color:#000;font-weight:bold;font-family:'Liberation Sans';width:28px;text-align:center;">"</div><div class="a" style="left:822px;top:427px;width:28px;height:28px;background:#C3C3C3"></div><div class="a t" style="left:822px;top:436.41px;font-size:11.5px;line-height:11.5px;color:#000;font-weight:bold;font-family:'Liberation Sans';width:28px;text-align:center;">,</div><div class="a" style="left:851px;top:427px;width:28px;height:28px;background:#C3C3C3"></div><div class="a t" style="left:851px;top:436.41px;font-size:11.5px;line-height:11.5px;color:#000;font-weight:bold;font-family:'Liberation Sans';width:28px;text-align:center;">:</div><div class="a" style="left:880px;top:427px;width:28px;height:28px;background:#C3C3C3"></div><div class="a t" style="left:880px;top:436.41px;font-size:11.5px;line-height:11.5px;color:#000;font-weight:bold;font-family:'Liberation Sans';width:28px;text-align:center;">[ ]</div><div class="a" style="left:793px;top:456px;width:39px;height:28px;background:#C3C3C3"></div><div class="a t" style="left:793px;top:465.41px;font-size:11.5px;line-height:11.5px;color:#000;font-weight:bold;font-family:'Liberation Sans';width:39px;text-align:center;">And</div><div class="a" style="left:833px;top:456px;width:38px;height:28px;background:#C3C3C3"></div><div class="a t" style="left:833px;top:465.41px;font-size:11.5px;line-height:11.5px;color:#000;font-weight:bold;font-family:'Liberation Sans';width:38px;text-align:center;">Or</div><div class="a" style="left:872px;top:456px;width:36px;height:28px;background:#C3C3C3"></div><div class="a t" style="left:872px;top:465.41px;font-size:11.5px;line-height:11.5px;color:#000;font-weight:bold;font-family:'Liberation Sans';width:36px;text-align:center;">Not</div><div class="a" style="left:793px;top:485px;width:57px;height:28px;background:#C3C3C3"></div><div class="a t" style="left:793px;top:494.41px;font-size:11.5px;line-height:11.5px;color:#000;font-weight:bold;font-family:'Liberation Sans';width:57px;text-align:center;">True</div><div class="a" style="left:851px;top:485px;width:57px;height:28px;background:#C3C3C3"></div><div class="a t" style="left:851px;top:494.41px;font-size:11.5px;line-height:11.5px;color:#000;font-weight:bold;font-family:'Liberation Sans';width:57px;text-align:center;">False</div><div class="a" style="left:793px;top:546px;width:114px;height:28px;background:#C3C3C3"></div><div class="a t" style="left:793px;top:555.41px;font-size:11.5px;line-height:11.5px;color:#222;font-weight:normal;font-family:'Liberation Sans';width:114px;text-align:center;">Check Syntax</div><div class="a" style="left:0px;top:578px;width:918px;height:20px;background:#F0F0F0"></div><div class="a t" style="left:787px;top:584.35px;font-size:11.4px;line-height:11.4px;color:#000;font-weight:normal;font-family:'Liberation Sans';letter-spacing:-0.4px;">3/24/2023</div><div class="a t" style="left:852px;top:584.35px;font-size:11.4px;line-height:11.4px;color:#000;font-weight:normal;font-family:'Liberation Sans';letter-spacing:-0.4px;">12:26 PM</div><svg class="a" style="left:907px;top:587px;" width="11" height="11" viewBox="0 0 11 11"><path d="M1 10 L10 1 M5 10 L10 5" stroke="#555" stroke-width="1.2"/></svg></div><div class="a" style="left:0;top:0;width:1481px;height:7px;background:#000"></div><div class="a" style="left:0;top:0;width:15px;height:733px;background:#000"></div><svg class="a" style="left:0px;top:0px;" width="1481" height="733" viewBox="0 0 1481 733"><g fill="none" stroke="#000" stroke-width="16" stroke-linecap="round" stroke-linejoin="round"><path d="M10 479 L150 479 C175 480 190 486 210 487 L265 487 C285 486 298 484 311 484"/><path d="M287 446 C305 459 326 468 339 489 C330 500 318 511 305 522"/><path d="M1349 0 L1349 16 C1350 25 1356 33 1361 43 C1365 52 1368 62 1369 76"/><path d="M1319 71 C1335 72 1352 74 1372 82 C1385 76 1398 70 1408 61"/></g></svg>
</body></html>
